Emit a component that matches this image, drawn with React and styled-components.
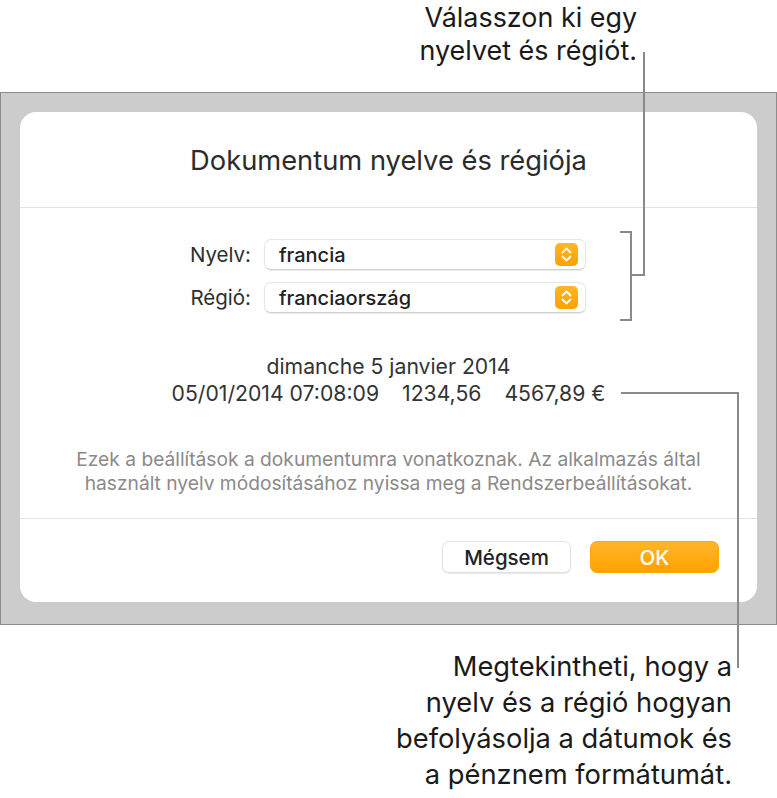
import React from "react";
import styled, { createGlobalStyle } from "styled-components";

const Global = createGlobalStyle`
  html, body { margin: 0; padding: 0; background: #fff; }
  body { font-family: Inter, Roboto, "Liberation Sans", sans-serif; -webkit-font-smoothing: antialiased; }
`;

const Page = styled.div`
  position: relative;
  width: 777px;
  height: 798px;
  display: flex;
  flex-direction: column;
  overflow: hidden;
  background: #fff;
`;

const Callout = styled.div`
  font-family: Inter, Roboto, "Liberation Sans", sans-serif;
  font-size: ${(p) => p.$fs}px;
  line-height: ${(p) => p.$lh}px;
  color: #1a1a1a;
  text-align: right;
  padding-right: ${(p) => p.$pr}px;
  padding-top: ${(p) => p.$pt}px;
  height: ${(p) => p.$h}px;
  box-sizing: border-box;
  white-space: nowrap;
`;

const Backdrop = styled.div`
  height: 533px;
  flex: none;
  box-sizing: border-box;
  border: 1px solid #8c8c8c;
  background: #cccccc;
  padding: 19px 19px 22px 19px;
`;

const Card = styled.div`
  height: 490px;
  background: #fff;
  border-radius: 16px;
  display: flex;
  flex-direction: column;
`;

const Header = styled.div`
  height: 95px;
  display: flex;
  align-items: center;
  justify-content: center;
  font-size: 27.3px;
  color: #2b2b2b;
  padding-top: 2px;
  box-sizing: border-box;
`;

const Divider = styled.div`
  height: 1px;
  flex: none;
  background: #e3e3e3;
  margin-top: ${(p) => (p.$auto ? "auto" : "0")};
`;

const Form = styled.div`
  margin-top: 31px;
  display: grid;
  grid-template-columns: 231px 322px;
  column-gap: 13px;
  row-gap: 12px;
  align-items: center;
`;

const Label = styled.div`
  text-align: right;
  font-size: 20.5px;
  color: #2e2e2e;
`;

const Popup = styled.div`
  height: 31px;
  box-sizing: border-box;
  border: 1px solid #e6e6e6;
  border-bottom-color: #cfcfcf;
  border-radius: 7px;
  box-shadow: 0 1px 1px rgba(0, 0, 0, 0.08);
  display: flex;
  align-items: center;
  justify-content: space-between;
  padding: 0 7px 0 14px;
  font-size: 20px;
  font-weight: 500;
  color: #222;
`;

const Preview = styled.div`
  margin-top: 40px;
  display: flex;
  flex-direction: column;
  align-items: center;
  font-size: 21.2px;
  color: #333;
  line-height: 27px;
`;

const PreviewRow = styled.div`
  display: flex;
  gap: 23px;
`;

const Help = styled.div`
  margin-top: 40px;
  text-align: center;
  font-size: 19.2px;
  line-height: 24px;
  color: #8a8a8a;
  white-space: nowrap;
`;

const Footer = styled.div`
  height: 83px;
  flex: none;
  display: flex;
  justify-content: flex-end;
  align-items: flex-start;
  gap: 19px;
  padding: 22px 38px 0 0;
  box-sizing: border-box;
`;

const Button = styled.div`
  width: 129px;
  height: 32px;
  box-sizing: border-box;
  border-radius: 7px;
  display: flex;
  align-items: center;
  justify-content: center;
  font-size: 20.5px;
  font-weight: 500;
  color: ${(p) => (p.$primary ? "#fff" : "#222")};
  background: ${(p) => (p.$primary ? "linear-gradient(#ffb52a, #ffa200)" : "#fff")};
  border: 1px solid ${(p) => (p.$primary ? "#ffa800" : "#e2e2e2")};
  box-shadow: ${(p) => (p.$primary ? "none" : "0 1px 1px rgba(0,0,0,0.1)")};
`;

const Overlay = styled.svg`
  position: absolute;
  left: 0;
  top: 0;
  pointer-events: none;
`;

const Stepper = () => (
  <svg width="23" height="23" viewBox="0 0 23 23">
    <defs>
      <linearGradient id="sg" x1="0" y1="0" x2="0" y2="1">
        <stop offset="0" stopColor="#ffb726" />
        <stop offset="1" stopColor="#ffa000" />
      </linearGradient>
    </defs>
    <rect x="0" y="0" width="23" height="23" rx="5" fill="url(#sg)" />
    <path d="M7.5 9.5 L11.5 5.5 L15.5 9.5" fill="none" stroke="#fff" strokeWidth="1.8" strokeLinecap="round" strokeLinejoin="round" />
    <path d="M7.5 13.5 L11.5 17.5 L15.5 13.5" fill="none" stroke="#fff" strokeWidth="1.8" strokeLinecap="round" strokeLinejoin="round" />
  </svg>
);

export default function App() {
  return (
    <>
      <Global />
      <Page>
        <Callout $fs={26.9} $pr={140} $pt={1} $h={92} $lh={33}>
          Válasszon ki egy
          <br />
          nyelvet és régiót.
        </Callout>
        <Backdrop>
          <Card>
            <Header>Dokumentum nyelve és régiója</Header>
            <Divider />
            <Form>
              <Label>Nyelv:</Label>
              <Popup>
                francia
                <Stepper />
              </Popup>
              <Label>Régió:</Label>
              <Popup>
                franciaország
                <Stepper />
              </Popup>
            </Form>
            <Preview>
              <div>dimanche 5 janvier 2014</div>
              <PreviewRow>
                <span>05/01/2014 07:08:09</span>
                <span>1234,56</span>
                <span>4567,89 €</span>
              </PreviewRow>
            </Preview>
            <Help>
              Ezek a beállítások a dokumentumra vonatkoznak. Az alkalmazás által
              <br />
              használt nyelv módosításához nyissa meg a Rendszerbeállításokat.
            </Help>
            <Divider $auto />
            <Footer>
              <Button>Mégsem</Button>
              <Button $primary>OK</Button>
            </Footer>
          </Card>
        </Backdrop>
        <Callout $fs={27.3} $pr={45} $pt={24} $h={173} $lh={36}>
          Megtekintheti, hogy a
          <br />
          nyelv és a régió hogyan
          <br />
          befolyásolja a dátumok és
          <br />
          a pénznem formátumát.
        </Callout>
        <Overlay width="777" height="798">
          <g fill="none" stroke="#8a8a8a" strokeWidth="2">
            <path d="M644 52 V275 H631" />
            <path d="M620 232 H631 V320 H620" />
            <path d="M621 393 H738 V668" />
          </g>
        </Overlay>
      </Page>
    </>
  );
}
